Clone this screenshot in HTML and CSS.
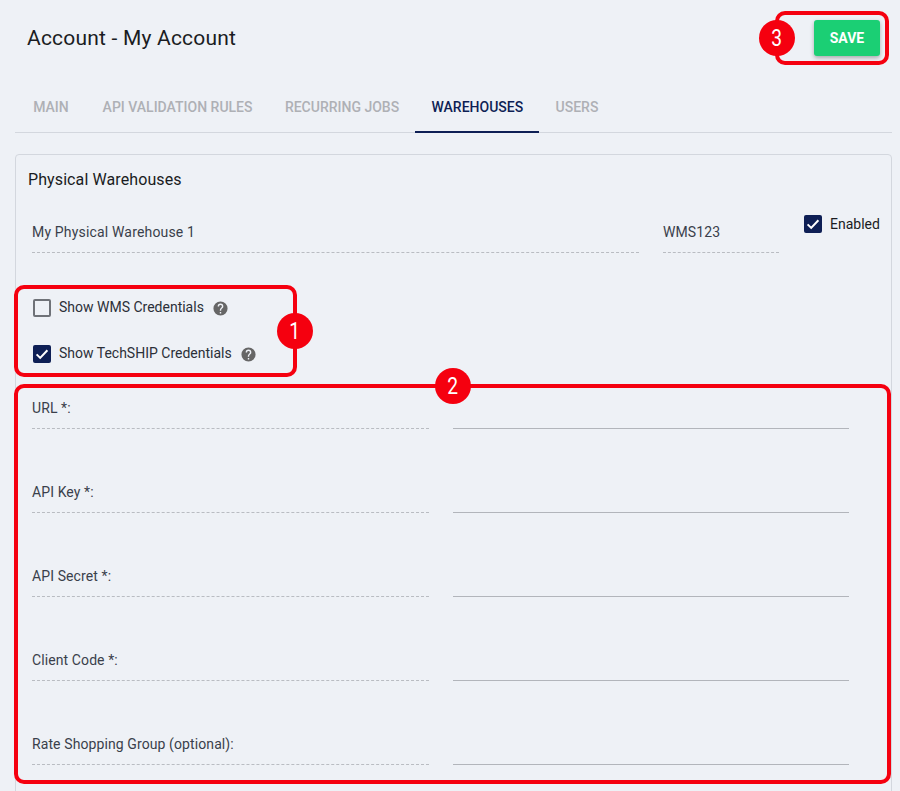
FILE: index.html
```html
<!DOCTYPE html>
<html lang="en">
<head>
<meta charset="utf-8">
<title>Account - My Account</title>
<link rel="stylesheet" href="styles.css">
</head>
<body>
<div class="page">
  <header class="topbar">
    <h1 class="title">Account - My Account</h1>
    <button class="save" type="button">SAVE</button>
  </header>
  <nav class="tabs">
    <a class="tab">MAIN</a>
    <a class="tab">API VALIDATION RULES</a>
    <a class="tab">RECURRING JOBS</a>
    <a class="tab active">WAREHOUSES</a>
    <a class="tab">USERS</a>
  </nav>
  <section class="card">
    <h2 class="card-title">Physical Warehouses</h2>
    <div class="wh-row">
      <div class="field name">My Physical Warehouse 1</div>
      <div class="field code">WMS123</div>
      <label class="check enabled">
        <span class="box on"><svg viewBox="0 0 18 18" width="18" height="18"><path d="M3.6 9.4l3.6 3.5 7.2-7.6" fill="none" stroke="#fff" stroke-width="2"/></svg></span>
        <span>Enabled</span>
      </label>
    </div>
    <div class="toggles">
      <label class="check">
        <span class="box"></span>
        <span class="toggle-text">Show WMS Credentials</span>
        <svg class="help" viewBox="0 0 24 24" width="17" height="17"><path fill="#666" d="M12 2a10 10 0 1 0 0 20 10 10 0 0 0 0-20zm1 17h-2v-2h2v2zm2.07-7.75l-.9.92C13.45 12.9 13 13.5 13 15h-2v-.5c0-1.1.45-2.1 1.17-2.83l1.24-1.26A2 2 0 0 0 14 9a2 2 0 0 0-4 0H8a4 4 0 0 1 8 0c0 .88-.36 1.68-.93 2.25z"/></svg>
      </label>
      <label class="check">
        <span class="box on"><svg viewBox="0 0 18 18" width="18" height="18"><path d="M3.6 9.4l3.6 3.5 7.2-7.6" fill="none" stroke="#fff" stroke-width="2"/></svg></span>
        <span class="toggle-text">Show TechSHIP Credentials</span>
        <svg class="help" viewBox="0 0 24 24" width="17" height="17"><path fill="#666" d="M12 2a10 10 0 1 0 0 20 10 10 0 0 0 0-20zm1 17h-2v-2h2v2zm2.07-7.75l-.9.92C13.45 12.9 13 13.5 13 15h-2v-.5c0-1.1.45-2.1 1.17-2.83l1.24-1.26A2 2 0 0 0 14 9a2 2 0 0 0-4 0H8a4 4 0 0 1 8 0c0 .88-.36 1.68-.93 2.25z"/></svg>
      </label>
    </div>
    <div class="creds">
      <div class="cred"><div class="field label">URL *:</div><div class="input"></div></div>
      <div class="cred"><div class="field label">API Key *:</div><div class="input"></div></div>
      <div class="cred"><div class="field label">API Secret *:</div><div class="input"></div></div>
      <div class="cred"><div class="field label">Client Code *:</div><div class="input"></div></div>
      <div class="cred"><div class="field label">Rate Shopping Group (optional):</div><div class="input"></div></div>
    </div>
  </section>
  <div class="mark mark-1"></div>
  <div class="mark mark-2"></div>
  <div class="mark mark-3"></div>
  <span class="num num-1"><span class="digit">1</span></span>
  <span class="num num-2"><span class="digit">2</span></span>
  <span class="num num-3"><span class="digit">3</span></span>
</div>
</body>
</html>
```

FILE: styles.css
```css
* { box-sizing: border-box; }
html, body { margin: 0; height: 100%; }
body {
  background: #eef1f6;
  font-family: Roboto, "Liberation Sans", sans-serif;
  color: #2b2f38;
  overflow: hidden;
}
.page { position: relative; height: 791px; overflow: hidden; padding: 0 8px 0 15px; }

.topbar {
  display: flex;
  justify-content: space-between;
  align-items: center;
  height: 76px;
  padding: 0 12px 0 12px;
}
.title { margin: 0; font-size: 21px; font-weight: 400; letter-spacing: .2px; color: #1a1c22; }
.save {
  width: 66px;
  height: 36px;
  border: 0;
  border-radius: 3px;
  background: #1bcf74;
  color: #fff;
  font: 700 14px Roboto, sans-serif;
  box-shadow: 0 2px 4px rgba(0, 0, 0, .3);
}

.tabs {
  display: flex;
  height: 57px;
  border-bottom: 1px solid #d3d7de;
  padding-left: 2px;
}
.tab {
  display: flex;
  align-items: center;
  padding: 7px 16.2px 0;
  font-size: 14px;
  font-weight: 500;
  color: #aeb0b5;
  white-space: nowrap;
  margin-bottom: -1px;
  border-bottom: 2px solid transparent;
}
.tab:first-child { margin-right: 1.5px; }
.active { color: #0e1f55; border-bottom-color: #0e1f55; }

.card {
  margin-top: 21px;
  border: 1px solid #d3d7de;
  border-radius: 4px;
  height: 700px;
  padding: 15px 12px 0 12px;
}
.card-title { margin: 0; font-size: 16px; font-weight: 400; line-height: 19px; letter-spacing: .1px; color: #1a1c22; }

.wh-row { display: flex; align-items: flex-start; margin-top: 16px; }
.field {
  flex: none;
  font-size: 14px;
  line-height: 20px;
  border-bottom: 1px dashed #b9bcc2;
  color: #3a3f4b;
}
.wh-row .field { height: 48px; padding-top: 17px; }
.name { width: 607px; margin-left: 4px; letter-spacing: .17px; }
.code { width: 116px; margin-left: 24px; letter-spacing: .1px; }

.check { display: flex; align-items: center; font-size: 14px; color: #2b2f38; }
.enabled { flex: none; margin: 10px 0 0 25px; color: #1a1c22; white-space: nowrap; }
.box {
  flex: none;
  width: 18px;
  height: 18px;
  margin-right: 8px;
  border: 2px solid #6f7278;
  border-radius: 2px;
}
.box.on { background: #0e1f55; border: 0; }
.box svg { display: block; }
.help { margin-left: 8px; flex: none; }
.toggle-text { padding-bottom: 2px; }

.toggles { margin: 46px 0 0 5px; display: flex; flex-direction: column; gap: 28px; }

.creds { margin-top: 25px; }
.cred { display: flex; height: 84px; padding-left: 4px; }
.label { width: 397px; height: 41px; padding-top: 10px; letter-spacing: .1px; }
.input { width: 396px; height: 41px; margin-left: 24px; border-bottom: 1px solid #b2b5bb; }

.mark { position: absolute; border: 4px solid #f5000f; border-radius: 10px; }
.mark-1 { left: 14px; top: 285px; width: 283px; height: 92px; }
.mark-2 { left: 14px; top: 384px; width: 877px; height: 400px; }
.mark-3 { left: 775px; top: 11px; width: 114px; height: 54px; }
.num {
  position: absolute;
  width: 36px;
  height: 36px;
  border-radius: 50%;
  background: #f5000f;
  color: #fff;
  font: 400 24px/36px Roboto, sans-serif;
  text-align: center;
}
.digit { display: inline-block; transform: scaleX(.8); }
.num-1 { left: 277px; top: 313px; }
.num-2 { left: 435px; top: 368px; }
.num-3 { left: 759px; top: 20px; }
```
